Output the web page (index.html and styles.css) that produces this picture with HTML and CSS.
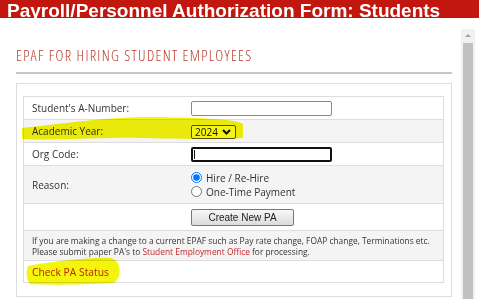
FILE: index.html
```html
<!DOCTYPE html>
<html>
<head>
  <title>Payroll/Personnel Authorization Form: Students</title>
  <link rel="stylesheet" href="styles.css">
</head>
<body>
  <header class="topbar"><span class="topbar-title">Payroll/Personnel Authorization Form: Students</span></header>

  <div class="page">
    <div class="main">
      <h2 class="page-title">EPAF for Hiring Student Employees</h2>

      <div class="form-box">
        <table class="epaf-table">
          <tr>
            <td class="label">Student's A-Number:</td>
            <td><input type="text" class="field"></td>
          </tr>
          <tr class="alt">
            <td class="label">Academic Year:</td>
            <td>
              <span class="year-select">
                <select>
                  <option>2024</option>
                </select>
                <svg width="9" height="6" viewBox="0 0 9 6"><path d="M1 1 L4.5 4.5 L8 1" fill="none" stroke="#111" stroke-width="2"/></svg>
              </span>
            </td>
          </tr>
          <tr>
            <td class="label">Org Code:</td>
            <td><span class="field focused"><span class="caret"></span></span></td>
          </tr>
          <tr class="alt reason-row">
            <td class="label">Reason:</td>
            <td>
              <label class="radio"><input type="radio" name="reason" checked> Hire / Re-Hire</label>
              <label class="radio"><input type="radio" name="reason"> One-Time Payment</label>
            </td>
          </tr>
          <tr class="button-row">
            <td></td>
            <td><button class="create-button">Create New PA</button></td>
          </tr>
          <tr class="alt info-row">
            <td colspan="2">
              If you are making a change to a current EPAF such as Pay rate change, FOAP change, Terminations etc.<br>
              Please submit paper PA's to <a href="#">Student Employment Office</a> for processing.
            </td>
          </tr>
          <tr class="status-row">
            <td colspan="2"><a href="#">Check PA Status</a></td>
          </tr>
        </table>
      </div>
    </div>

    <div class="scrollbar">
      <div class="scroll-arrow"></div>
      <div class="scroll-thumb"></div>
    </div>
  </div>

  <!-- highlighter marks drawn over the screenshot -->
  <svg class="highlights" width="479" height="299" viewBox="0 0 479 299">
    <path d="M22 128 C60 124 110 116 160 117 C200 118 236 119 243 124 L243 138 C200 141 150 137 110 138 C70 139 40 140 22 139 Z"/>
    <path d="M28 266 C50 262 90 257 110 258 C122 259 123 281 112 283 C80 285 45 285 30 284 C26 280 26 270 28 266 Z"/>
  </svg>
</body>
</html>
```

FILE: styles.css
```css
body {
  margin: 0;
  padding: 0;
  background-color: #fff;
  font-family: "Open Sans", sans-serif;
  color: #333;
  overflow: hidden;
}

.topbar {
  background-color: #c1170e;
  color: #fff;
  height: 18px;
  padding-left: 7px;
  white-space: nowrap;
}

.topbar-title {
  display: block;
  font-family: "Liberation Sans", Arial, sans-serif;
  font-weight: bold;
  font-size: 19px;
  line-height: 21.5px;
}

.page {
  display: flex;
  height: 281px;
}

.main {
  width: 436px;
  margin-left: 16px;
}

.page-title {
  margin: 28px 0 0 0;
  padding-bottom: 8px;
  border-bottom: 2px solid #c8c8c8;
  font-family: "Open Sans", "DejaVu Sans Condensed", sans-serif;
  font-stretch: 87.5%;
  font-weight: 300;
  font-size: 15px;
  line-height: 18px;
  text-transform: uppercase;
  color: #b83a2a;
  letter-spacing: 1.3px;
}

.form-box {
  margin-top: 9px;
  border: 1px solid #ddd;
  padding: 12px 7px 13px 6px;
}

.epaf-table {
  width: 100%;
  border-collapse: collapse;
  border: 1px solid #ddd;
  font-size: 10px;
}

.epaf-table td {
  border-top: 1px solid #ddd;
  padding: 0 8px;
  height: 22px;
}

.epaf-table td.label {
  width: 143px;
}

.epaf-table tr.alt td {
  background-color: #f4f4f4;
}

.field {
  width: 141px;
  height: 15px;
  box-sizing: border-box;
  border: 1px solid #888;
  border-radius: 2px;
  padding: 0 2px;
  margin: 0;
  display: block;
  background-color: #fff;
}

.field.focused {
  border: 2px solid #111;
  display: flex;
  align-items: center;
  padding: 0 1px;
}

.caret {
  width: 1px;
  height: 9px;
  background-color: #111;
}

.year-select {
  display: inline-flex;
  align-items: center;
  gap: 4px;
  height: 12px;
  padding: 0 4px 0 3px;
  border: 1px solid #555;
  border-radius: 2px;
  background-color: #fff;
  vertical-align: middle;
}

.year-select select {
  appearance: none;
  border: none;
  background: transparent;
  padding: 0;
  margin: 0;
  font-family: "Open Sans", sans-serif;
  font-size: 10px;
  color: #111;
  line-height: 12px;
}

.reason-row td {
  height: 37px;
}

.radio {
  display: flex;
  align-items: center;
  line-height: 14px;
}

.radio input {
  width: 11px;
  height: 11px;
  margin: 0 4px 0 0;
}

.button-row td {
  height: 26px;
}

.create-button {
  display: block;
  width: 103px;
  height: 17px;
  padding: 0;
  font-family: "Liberation Sans", Arial, sans-serif;
  font-size: 10px;
  color: #222;
  background: linear-gradient(#f7f7f7, #dcdcdc);
  border: 1px solid #777;
  border-radius: 2px;
}

.info-row td {
  height: 29px;
  font-size: 8.4px;
  line-height: 11px;
}

.info-row a {
  color: #c0282d;
  text-decoration: none;
}

.status-row td {
  height: 21px;
}

.status-row a {
  color: #c0282d;
  text-decoration: none;
  font-size: 10.3px;
}

.scrollbar {
  width: 14px;
  margin-left: 9px;
  margin-top: 11px;
  background-color: #f1f1f1;
  display: flex;
  flex-direction: column;
  align-items: center;
}

.scroll-arrow {
  margin-top: 5px;
  width: 0;
  height: 0;
  border-left: 3px solid transparent;
  border-right: 3px solid transparent;
  border-bottom: 3px solid #a3a3a3;
}

.scroll-thumb {
  margin-top: 6px;
  width: 10px;
  flex-grow: 1;
  background-color: #c1c1c1;
}

.highlights {
  position: absolute;
  left: 0;
  top: 0;
  pointer-events: none;
  mix-blend-mode: multiply;
  fill: #f4f40c;
}
```
